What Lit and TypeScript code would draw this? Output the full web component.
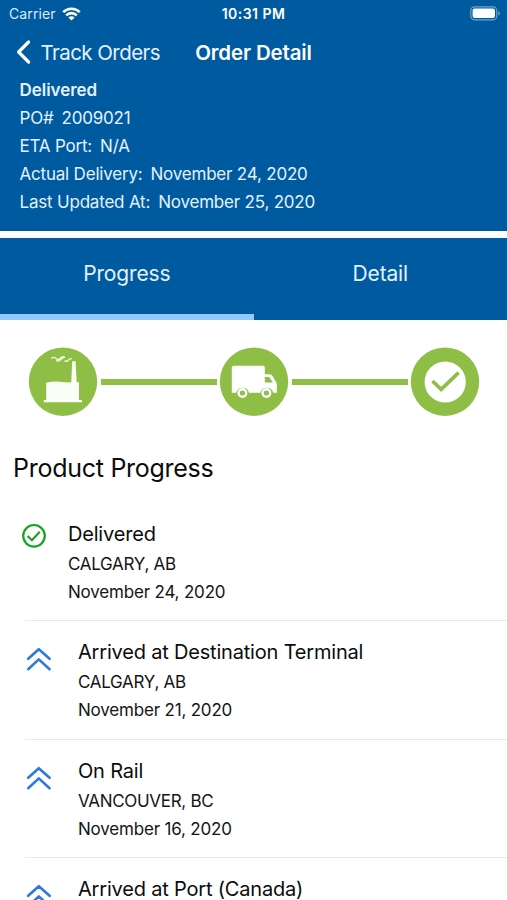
import { LitElement, html, css, svg } from "lit";
import { customElement, property } from "lit/decorators.js";

interface Step {
  title: string;
  place?: string;
  date?: string;
  done?: boolean;
}

const steps: Step[] = [
  { title: "Delivered", place: "CALGARY, AB", date: "November 24, 2020", done: true },
  { title: "Arrived at Destination Terminal", place: "CALGARY, AB", date: "November 21, 2020" },
  { title: "On Rail", place: "VANCOUVER, BC", date: "November 16, 2020" },
  { title: "Arrived at Port (Canada)" },
];

@customElement("status-bar")
class StatusBar extends LitElement {
  static styles = css`
    :host { display: grid; grid-template-columns: 1fr auto 1fr; height: 27px; align-items: center; padding: 0 6px 1px 6px; font-size: 14px; }
    .left { display: flex; align-items: center; gap: 6px; padding-left: 3px; color: #d9ecfb; letter-spacing: 0.1px; }
    .time { font-weight: 600; font-size: 14px; letter-spacing: 0.45px; }
    .battery { justify-self: end; display: block; margin-top: -1px; }
  `;
  render() {
    return html`
      <div class="left">
        <span>Carrier</span>
        <svg width="19" height="14" viewBox="0 0 19 14">
          <g fill="none" stroke="#fff" stroke-width="2.6">
            <path d="M1.2 5.2C5.8 .6 13.2 .6 17.8 5.2"></path>
            <path d="M4.2 8.3C7.1 5.4 11.9 5.4 14.8 8.3"></path>
          </g>
          <path d="M6.4 10.4C8.2 8.8 10.8 8.8 12.6 10.4L9.5 13.6Z" fill="#fff"></path>
        </svg>
      </div>
      <span class="time">10:31 PM</span>
      <svg class="battery" width="31" height="15" viewBox="0 0 31 15">
        <rect x=".8" y=".8" width="26" height="13" rx="3.8" fill="none" stroke="#6fa3cf" stroke-width="1.2"></rect>
        <rect x="2.6" y="2.6" width="22.4" height="9.4" rx="2" fill="#fff"></rect>
        <path d="M28.4 5.2C30.6 6 30.6 8.6 28.4 9.4Z" fill="#6fa3cf"></path>
      </svg>
    `;
  }
}

@customElement("order-stages")
class OrderStages extends LitElement {
  static styles = css`
    :host { display: flex; align-items: center; justify-content: space-between; padding: 27px 27px 0 28px; }
    .stage { width: 70px; height: 70px; display: block; flex: none; }
    .link { flex: 1; height: 5.4px; margin: 0 2.5px; background: #90be47; }
  `;
  private stage(content: unknown) {
    return html`<svg class="stage" viewBox="0 0 70 70">
      <circle cx="35" cy="34.7" r="34.2" fill="#8fbe46"></circle>${content}
    </svg>`;
  }
  render() {
    return html`
      ${this.stage(svg`
        <path d="M18.2 35.7Q25 34.2 31 34.7T43.2 35.5L44.2 14.2H47.6L48.7 35.3H51V53H54V55.2H15.8V53H18.2Z" fill="#fbfef4"></path>
        <path d="M23.2 11.6Q25.6 9.4 28 11.4T32 11.4T36.6 9.8M28 13.4Q30.4 15 32.6 12.8T37 10.2M36.4 13.8Q38.6 15 40.2 13.2T43.8 11.6" fill="none" stroke="#f6fbe9" stroke-width="1.3"></path>`)}
      <div class="link"></div>
      ${this.stage(svg`
        <path fill="#fff" d="M14.8 18.7H44.2Q45.8 18.7 45.8 20.3V27.2H50.6Q52.4 27.2 53.4 28.8L57.2 35.6Q57.8 36.6 57.8 38V45.8H54.2A6.6 6.6 0 0 0 41.4 45.8H30A6.6 6.6 0 0 0 17.2 45.8H12.8V20.7Q12.8 18.7 14.8 18.7Z"></path>
        <path fill="#8fbe46" d="M45.8 30H50.2L54 35.6H45.8Z"></path>
        <circle cx="23.4" cy="46" r="5" fill="#fff"></circle>
        <circle cx="47.4" cy="46" r="5" fill="#fff"></circle>
        <circle cx="23.4" cy="46" r="2.6" fill="#8fbe46"></circle>
        <circle cx="47.4" cy="46" r="2.6" fill="#8fbe46"></circle>`)}
      <div class="link"></div>
      ${this.stage(svg`
        <circle cx="35.2" cy="35" r="20.6" fill="#fff"></circle>
        <path d="M22.4 34L31.2 42.4L48.6 25.6" fill="none" stroke="#8fbe46" stroke-width="3.6"></path>`)}
    `;
  }
}

@customElement("progress-step")
class ProgressStep extends LitElement {
  @property({ attribute: false }) step!: Step;
  static styles = css`
    :host { display: block; padding-left: 25px; }
    .row { height: 118.4px; box-sizing: border-box; border-bottom: 1.4px solid #e9e9eb; display: flex; padding-top: 16px; }
    .icon { width: 28px; height: 28px; margin-top: 8px; flex: none; display: block; }
    .text { margin-left: 25px; white-space: nowrap; color: #151515; }
    .done .icon { margin: 3px 0 0 -6px; }
    .done .text { margin-left: 21px; }
    .title { font-size: 20px; line-height: 30px; margin-bottom: 0.8px; letter-spacing: -0.19px; color: #0c0c0c; }
    .line { font-size: 17px; line-height: 28.2px; letter-spacing: -0.19px; }
    .place { letter-spacing: -0.3px; }
  `;
  render() {
    const s = this.step;
    return html`
      <div class="row ${s.done ? "done" : ""}">
        ${s.done
          ? html`<svg class="icon" viewBox="0 0 28 28" fill="none" stroke="#14a51f">
              <circle cx="15" cy="13.8" r="10.8" stroke-width="2.2"></circle>
              <path d="M8.6 14.1L12.9 18.2L20.8 9.8" stroke-width="2.1"></path>
            </svg>`
          : html`<svg class="icon" viewBox="0 0 28 28" fill="none" stroke="#2f78dc" stroke-width="2.6" stroke-linecap="round" stroke-linejoin="round">
              <path d="M3.2 13.8L13.8 4.2L24.6 13.8M3.2 24.2L13.8 14.4L24.6 24.2"></path>
            </svg>`}
        <div class="text">
          <div class="title">${s.title}</div>
          ${s.place ? html`<div class="line place">${s.place}</div>` : ""}
          ${s.date ? html`<div class="line">${s.date}</div>` : ""}
        </div>
      </div>
    `;
  }
}

@customElement("app-root")
class AppRoot extends LitElement {
  static styles = css`
    :host { display: block; width: 507px; height: 900px; overflow: hidden; background: #fff; font-family: Inter, "Liberation Sans", sans-serif; }
    .header { height: 231px; background: #005a9f; color: #fff; box-sizing: border-box; }
    .nav { display: grid; grid-template-columns: 1fr auto 1fr; align-items: center; height: 48px; font-size: 20.5px; white-space: nowrap; }
    .back { display: flex; align-items: center; gap: 8.5px; padding-left: 15px; color: #e3f2ff; letter-spacing: -0.55px; }
    .back svg { display: block; }
    .heading { font-weight: 600; font-size: 20.5px; letter-spacing: -0.15px; }
    .facts { padding-left: 19.5px; font-size: 17px; line-height: 28.1px; letter-spacing: -0.2px; color: #e3f2ff; }
    .fact { display: flex; gap: 8px; }
    .state { font-weight: 600; letter-spacing: -0.05px; }
    .tabs { display: flex; margin-top: 7px; height: 82px; background: #005a9f; color: #e3f2ff; font-size: 21px; letter-spacing: -0.15px; }
    .tab { flex: 1; text-align: center; line-height: 72px; box-sizing: border-box; border-bottom: 6px solid transparent; }
    .active { border-color: #92cbfb; }
    .section { font-size: 25px; line-height: 36px; padding: 33px 0 0 13px; letter-spacing: -0.27px; color: #0c0c0c; }
    .list { padding-top: 17px; }
  `;
  render() {
    const facts = [
      ["PO#", "2009021"],
      ["ETA Port:", "N/A"],
      ["Actual Delivery:", "November 24, 2020"],
      ["Last Updated At:", "November 25, 2020"],
    ];
    return html`
      <div class="header">
        <status-bar></status-bar>
        <div class="nav">
          <div class="back">
            <svg width="17" height="26" viewBox="0 0 17 26"><path d="M13.6 3L3.6 13L13.6 23" fill="none" stroke="#fff" stroke-width="3.2" stroke-linecap="round" stroke-linejoin="round"></path></svg>
            <span>Track Orders</span>
          </div>
          <div class="heading">Order Detail</div>
        </div>
        <div class="facts">
          <div class="state"><span>Delivered</span></div>
          ${facts.map(([k, v]) => html`<div class="fact"><span>${k}</span><span>${v}</span></div>`)}
        </div>
      </div>
      <div class="tabs">
        <div class="tab active"><span>Progress</span></div>
        <div class="tab"><span>Detail</span></div>
      </div>
      <order-stages></order-stages>
      <div class="section"><span>Product Progress</span></div>
      <div class="list">${steps.map((s) => html`<progress-step .step=${s}></progress-step>`)}</div>
    `;
  }
}
